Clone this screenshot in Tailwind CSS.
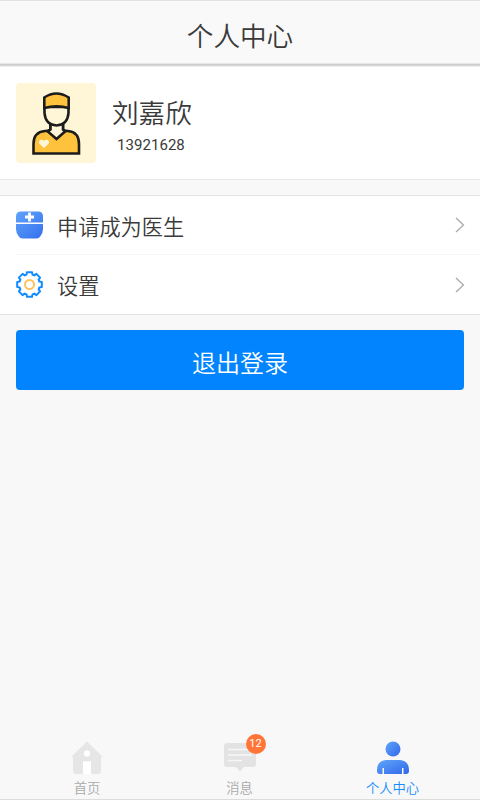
<!DOCTYPE html>
<html lang="zh-CN">
<head>
<meta charset="utf-8">
<title>个人中心</title>
<script src="https://cdn.jsdelivr.net/npm/@tailwindcss/browser@4"></script>
</head>
<body class="bg-[#f8f8f8]">
<div class="flex h-[800px] w-[480px] flex-col overflow-hidden border-b border-[#dcdcdc] bg-[#f8f8f8] font-['Noto_Sans_CJK_SC',sans-serif] font-[350] text-[#3a3a3a]">
  <header class="relative flex h-[67px] shrink-0 items-center justify-center border-t border-[#e2e2e2] bg-[#f9f9f9] pt-px shadow-[inset_0_-1px_0_#ececec,inset_0_-2px_0_#d8d8d8,inset_0_-3px_0_#cdcdcd,inset_0_-4px_0_#e6e6e6]">
    <h1 class="text-[26.6px] leading-8">个人中心</h1>
  </header>

  <section class="flex h-[113px] shrink-0 border-b border-[#e8e8e8] bg-white pt-4 pl-4">
    <div class="size-20 overflow-hidden rounded bg-[#fff6d8]">
      <svg class="size-20" viewBox="0 0 80 80" fill="none" stroke="#1c1c1c" stroke-width="2.6">
        <path d="M34.500 41v5.500Q33.500 48 29 48Q17.500 49 17.500 61v9.500h45.500V61Q63 49 52 48Q48 48 47 46.500V41" fill="#ffc23c"/>
        <path d="M34.500 41v6l-2.500 1.500L40.500 56l8.500-7.500-2-1.500V41Z" fill="#fff6d8" stroke="none"/>
        <path d="M34.500 40v6.500l-3 1.800L40.500 56l8.800-7.700-2.300-1.800V40"/>
        <path d="M28.500 24v6q1 12 12 12.500q11-.5 12-12.500v-6Z" fill="#fff6d8"/>
        <path d="M28.300 25V14.500q12-8 24.400 0v10.500q-12-3.500-24.400 0Z" fill="#ffc23c"/>
        <path d="M28 65l-4.300-4c-2.500-3.500 2-6 4.300-3 2.300-3 6.800-.5 4.300 3Z" fill="#fff6d8" stroke="none"/>
      </svg>
    </div>
    <div class="ml-4 pt-[13px]">
      <p class="text-[26.6px] leading-8">刘嘉欣</p>
      <p class="ml-[5px] mt-[7px] font-['Roboto',sans-serif] text-[15px] font-normal leading-5 tracking-[0.05px]">13921628</p>
    </div>
  </section>

  <section class="mt-[15px] h-[120px] shrink-0 border-y border-[#e4e4e4] bg-white pl-4 text-[21.2px]">
    <div class="flex h-[59px] items-center border-b border-[#f7f7f7] pr-[15px]">
      <svg class="size-7" viewBox="0 0 28 28">
        <defs><linearGradient id="med" gradientUnits="userSpaceOnUse" x1="0" y1="0" x2="24" y2="28"><stop stop-color="#60a5fb"/><stop offset="1" stop-color="#3871ee"/></linearGradient></defs>
        <path d="M5 .5h17q5 0 5 5v6H0v-6Q0 .5 5 .5Z" fill="url(#med)"/>
        <path d="M0 13h27v5q0 3.500-2.500 7-1.500 2.500-4 2.500h-14q-2.500 0-4-2.500Q0 21.500 0 18Z" fill="url(#med)"/>
        <path d="M13.500 1.500v9M9 6h9" stroke="#fff" stroke-width="2.800"/>
      </svg>
      <span class="ml-[13px] flex-1 pt-px">申请成为医生</span>
      <svg class="h-4 w-[10px]" viewBox="0 0 10 16" fill="none" stroke="#aaa" stroke-width="1.3"><path d="M1 1l7.500 7L1 15"/></svg>
    </div>
    <div class="flex h-[59px] items-center pr-[15px]">
      <svg class="size-7" viewBox="-13.500 -13.500 28 28" fill="none">
        <path d="M-3-9.850L-2.600-12.300H2.600L3-9.850L4.800-9.100L6.900-10.600L10.600-6.900L9.100-4.800L9.850-3L12.300-2.600V2.600L9.850 3L9.100 4.800L10.600 6.900L6.900 10.600L4.800 9.100L3 9.850L2.600 12.300H-2.600L-3 9.850L-4.800 9.100L-6.900 10.600L-10.600 6.900L-9.100 4.800L-9.850 3L-12.300 2.600V-2.600L-9.850-3L-9.100-4.800L-10.600-6.900L-6.900-10.600L-4.800-9.100Z" stroke="#108bff" stroke-width="2" stroke-linejoin="round"/>
        <circle cx="0" cy="0" r="4.500" stroke="#ffc35c" stroke-width="2"/>
      </svg>
      <span class="ml-[13px] flex-1 pt-px">设置</span>
      <svg class="h-4 w-[10px]" viewBox="0 0 10 16" fill="none" stroke="#aaa" stroke-width="1.3"><path d="M1 1l7.500 7L1 15"/></svg>
    </div>
  </section>

  <button class="mx-4 mt-[15px] h-[60px] shrink-0 rounded bg-[#0284ff] pt-[3px] text-[24px] text-white">退出登录</button>

  <nav class="mt-auto grid h-[69px] shrink-0 grid-cols-[174px_131px_175px] text-[13.3px] text-[#aaa]">
    <div class="flex flex-col items-center">
      <svg class="mt-[10px] h-9 w-8 shrink-0" viewBox="0 0 32 36" fill="#e6e6e6">
        <path fill-rule="evenodd" d="M16 1.500L32 17h-2v14q0 3-3 3h-7V21.500h-8V34H5q-3 0-3-3V17H0ZM16 10.500a3 3 0 100 6 3 3 0 000-6Z"/>
        <path d="M12 21.500h8V34h-8ZM16 10.500a3 3 0 100 6 3 3 0 000-6Z" fill="#fff"/>
      </svg>
      <span class="mt-[2px] leading-5">首页</span>
    </div>
    <div class="flex flex-col items-center">
      <div class="relative mt-[10px] h-9 w-8">
        <svg class="h-9 w-8" viewBox="0 0 32 36">
          <path d="M3 3h26q3 0 3 3v18q0 3-3 3h-9l-4 4.500-4-4.500H3q-3 0-3-3V6q0-3 3-3Z" fill="#e3e3e3"/>
          <path d="M4 9.500h24M4 15h24M4 20.500h14" stroke="#f7f7f7" stroke-width="1.600"/>
        </svg>
        <span class="absolute -top-[6px] left-[22px] flex size-5 items-center justify-center rounded-full bg-[#ff7537] pt-px font-['Roboto',sans-serif] text-[11px] font-normal text-white">12</span>
      </div>
      <span class="mt-[2px] leading-5">消息</span>
    </div>
    <div class="flex flex-col items-center text-[#148bff]">
      <svg class="mt-[10px] h-9 w-8 shrink-0" viewBox="0 0 32 36">
        <defs><linearGradient id="user" x1="0" y1="0" x2="1" y2="1"><stop stop-color="#60a5fb"/><stop offset="1" stop-color="#3268e8"/></linearGradient></defs>
        <circle cx="16" cy="9" r="7.500" fill="url(#user)"/>
        <path d="M9 20h14q9 1 9 10v1q0 3-3 3h-2.500v-6h-1.500v6H7v-6H5.500v6H3q-3 0-3-3v-1q0-9 9-10Z" fill="url(#user)"/>
      </svg>
      <span class="mt-[2px] leading-5">个人中心</span>
    </div>
  </nav>
</div>
</body>
</html>
